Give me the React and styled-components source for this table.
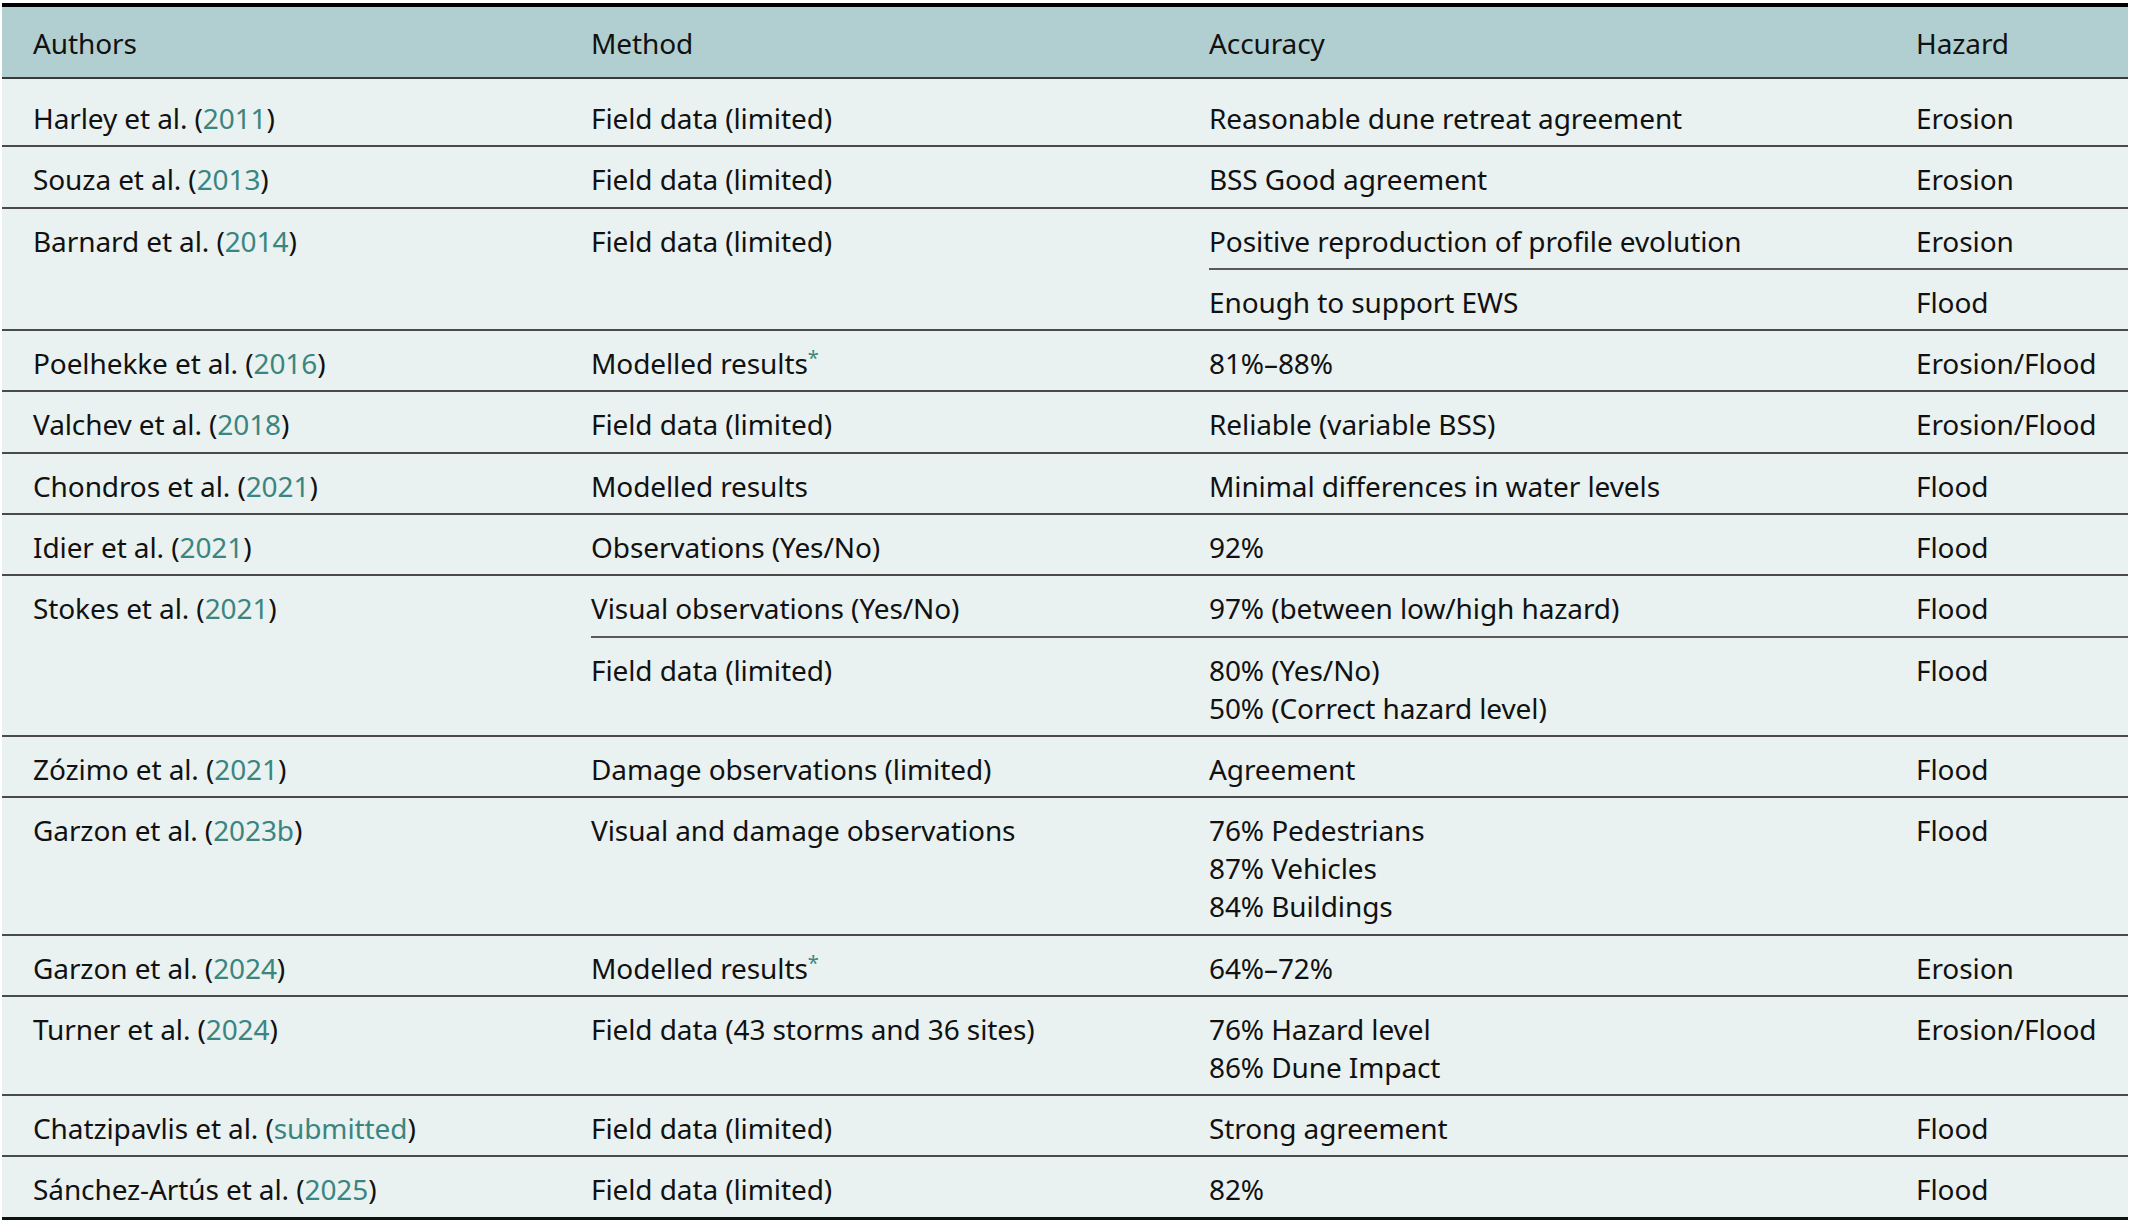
import React from 'react';
import styled, { createGlobalStyle } from 'styled-components';

const GlobalStyle = createGlobalStyle`
  body {
    margin: 0;
    background: #ffffff;
    font-family: "Noto Sans", "Open Sans", sans-serif;
    color: #111111;
  }
`;

const COLUMNS = '589px 618px 707px 1fr';

const Table = styled.div`
  width: 2126px;
  margin: 3px 0 0 2px;
  font-size: 28px;
  line-height: 38px;
  letter-spacing: -0.1px;
  border-bottom: 3px solid #111111;
`;

const HeadRow = styled.div`
  display: grid;
  grid-template-columns: ${COLUMNS};
  background-color: #b1cfd1;
  border-top: 4px solid #000000;
  border-bottom: 2px solid #3a3a3a;
`;

const HeadCell = styled.div`
  padding: 17px 20px 15px ${(p) => (p.$first ? '31px' : '0')};
`;

const Body = styled.div`
  background-color: #e9f1f1;
  padding-top: 7px;
`;

const Group = styled.div`
  display: grid;
  grid-template-columns: ${COLUMNS};
  border-bottom: 2px solid #4a4a4a;

  &:last-child {
    border-bottom: none;
  }
`;

const Cell = styled.div`
  grid-row: span ${(p) => p.$span || 1};
  padding: 13px 20px 8.3px ${(p) => (p.$first ? '31px' : '0')};
  border-bottom: ${(p) => (p.$divider ? '2px solid #5a5a5a' : 'none')};
`;

const Line = styled.span`
  display: block;
`;

const Ref = styled.span`
  color: #3b8580;
`;

const Star = styled.sup`
  color: #3b8580;
  font-size: 20px;
  line-height: 0;
  vertical-align: 9px;
`;

const groups = [
  { author: 'Harley et al.', year: '2011', subs: [{ method: 'Field data (limited)', accuracy: ['Reasonable dune retreat agreement'], hazard: 'Erosion' }] },
  { author: 'Souza et al.', year: '2013', subs: [{ method: 'Field data (limited)', accuracy: ['BSS Good agreement'], hazard: 'Erosion' }] },
  {
    author: 'Barnard et al.',
    year: '2014',
    method: 'Field data (limited)',
    subs: [
      { accuracy: ['Positive reproduction of profile evolution'], hazard: 'Erosion' },
      { accuracy: ['Enough to support EWS'], hazard: 'Flood' },
    ],
  },
  { author: 'Poelhekke et al.', year: '2016', subs: [{ method: 'Modelled results', star: true, accuracy: ['81%–88%'], hazard: 'Erosion/Flood' }] },
  { author: 'Valchev et al.', year: '2018', subs: [{ method: 'Field data (limited)', accuracy: ['Reliable (variable BSS)'], hazard: 'Erosion/Flood' }] },
  { author: 'Chondros et al.', year: '2021', subs: [{ method: 'Modelled results', accuracy: ['Minimal differences in water levels'], hazard: 'Flood' }] },
  { author: 'Idier et al.', year: '2021', subs: [{ method: 'Observations (Yes/No)', accuracy: ['92%'], hazard: 'Flood' }] },
  {
    author: 'Stokes et al.',
    year: '2021',
    subs: [
      { method: 'Visual observations (Yes/No)', accuracy: ['97% (between low/high hazard)'], hazard: 'Flood' },
      { method: 'Field data (limited)', accuracy: ['80% (Yes/No)', '50% (Correct hazard level)'], hazard: 'Flood' },
    ],
  },
  { author: 'Zózimo et al.', year: '2021', subs: [{ method: 'Damage observations (limited)', accuracy: ['Agreement'], hazard: 'Flood' }] },
  {
    author: 'Garzon et al.',
    year: '2023b',
    subs: [{ method: 'Visual and damage observations', accuracy: ['76% Pedestrians', '87% Vehicles', '84% Buildings'], hazard: 'Flood' }],
  },
  { author: 'Garzon et al.', year: '2024', subs: [{ method: 'Modelled results', star: true, accuracy: ['64%–72%'], hazard: 'Erosion' }] },
  {
    author: 'Turner et al.',
    year: '2024',
    subs: [{ method: 'Field data (43 storms and 36 sites)', accuracy: ['76% Hazard level', '86% Dune Impact'], hazard: 'Erosion/Flood' }],
  },
  { author: 'Chatzipavlis et al.', year: 'submitted', subs: [{ method: 'Field data (limited)', accuracy: ['Strong agreement'], hazard: 'Flood' }] },
  { author: 'Sánchez-Artús et al.', year: '2025', subs: [{ method: 'Field data (limited)', accuracy: ['82%'], hazard: 'Flood' }] },
];

function GroupRow({ group }) {
  const n = group.subs.length;
  return (
    <Group>
      <Cell $first $span={n}>
        {group.author} (<Ref>{group.year}</Ref>)
      </Cell>
      {group.method && <Cell $span={n}>{group.method}</Cell>}
      {group.subs.map((sub, i) => {
        const divider = i < n - 1;
        return (
          <React.Fragment key={i}>
            {sub.method && (
              <Cell $divider={divider}>
                {sub.method}
                {sub.star && <Star>*</Star>}
              </Cell>
            )}
            <Cell $divider={divider}>
              {sub.accuracy.map((line) => (
                <Line key={line}>{line}</Line>
              ))}
            </Cell>
            <Cell $divider={divider}>{sub.hazard}</Cell>
          </React.Fragment>
        );
      })}
    </Group>
  );
}

export default function App() {
  return (
    <>
      <GlobalStyle />
      <Table>
        <HeadRow>
          <HeadCell $first>Authors</HeadCell>
          <HeadCell>Method</HeadCell>
          <HeadCell>Accuracy</HeadCell>
          <HeadCell>Hazard</HeadCell>
        </HeadRow>
        <Body>
          {groups.map((g, i) => (
            <GroupRow key={i} group={g} />
          ))}
        </Body>
      </Table>
    </>
  );
}
